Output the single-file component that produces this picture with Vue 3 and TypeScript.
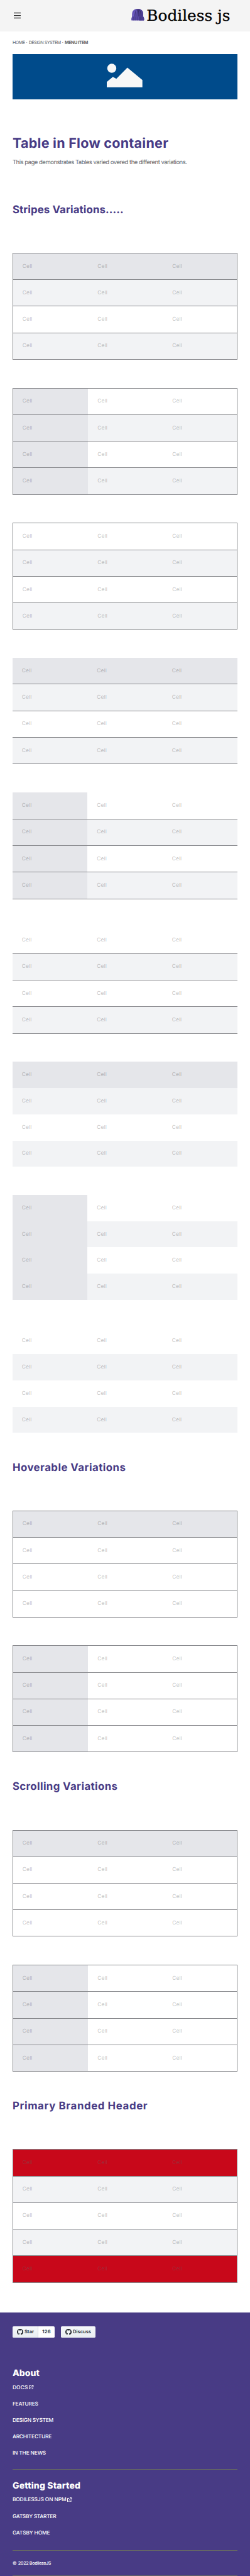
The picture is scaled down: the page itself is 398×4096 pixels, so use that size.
<script setup lang="ts">
import type { Directive } from 'vue'

type Frame = 'boxed' | 'lined' | 'plain'
interface TableSpec {
  frame: Frame
  header?: 'row' | 'column'
  striped?: boolean
  branded?: boolean
  rows: number
}
interface Section {
  title: string
  width: number
  tables: TableSpec[]
}
interface FooterLink {
  label: string
  width: number
  external?: boolean
}

const frames: Frame[] = ['boxed', 'lined', 'plain']
const sections: Section[] = [
  {
    title: 'Stripes Variations.....',
    width: 284,
    tables: frames.flatMap((frame): TableSpec[] => [
      { frame, header: 'row', striped: true, rows: 4 },
      { frame, header: 'column', striped: true, rows: 4 },
      { frame, striped: true, rows: 4 },
    ]),
  },
  {
    title: 'Hoverable Variations',
    width: 290,
    tables: [
      { frame: 'boxed', header: 'row', rows: 4 },
      { frame: 'boxed', header: 'column', rows: 4 },
    ],
  },
  {
    title: 'Scrolling Variations',
    width: 269,
    tables: [
      { frame: 'boxed', header: 'row', rows: 4 },
      { frame: 'boxed', header: 'column', rows: 4 },
    ],
  },
  {
    title: 'Primary Branded Header',
    width: 346,
    tables: [{ frame: 'boxed', striped: true, branded: true, rows: 5 }],
  },
]

const footer: { title: string; width: number; links: FooterLink[] }[] = [
  {
    title: 'About',
    width: 69,
    links: [
      { label: 'DOCS', width: 39.5, external: true },
      { label: 'FEATURES', width: 65.5 },
      { label: 'DESIGN SYSTEM', width: 104.5 },
      { label: 'ARCHITECTURE', width: 100 },
      { label: 'IN THE NEWS', width: 85.5 },
    ],
  },
  {
    title: 'Getting Started',
    width: 174,
    links: [
      { label: 'BODILESSJS ON NPM', width: 137.5, external: true },
      { label: 'GATSBY STARTER', width: 111.5 },
      { label: 'GATSBY HOME', width: 95.5 },
    ],
  },
]

function tableClass(t: TableSpec): string[] {
  return [
    t.frame,
    t.header ? `head-${t.header}` : '',
    t.striped ? 'striped' : '',
    t.branded ? 'branded' : '',
  ]
}

/* Tracks a line of text so that it spans the given width, in hundredths of a rem. */
const vTrack: Directive<HTMLElement, number> = {
  mounted(el, { value }) {
    const unit = parseFloat(getComputedStyle(document.documentElement).fontSize) / 100
    const count = (el.textContent ?? '').length
    const natural = el.getBoundingClientRect().width
    el.style.letterSpacing = `${(value * unit - natural) / count}px`
  },
}
</script>

<template>
  <div class="page">
    <header class="top">
      <svg class="burger" viewBox="0 0 18 15" aria-label="Menu">
        <path d="M0 1.1H18M0 7.5H18M0 13.9H18" stroke="#222" stroke-width="2" />
      </svg>
      <svg class="logo" viewBox="336 20 256 48">
        <path d="M338 44V37C338 28 344 23.3 352.300 23.300S366.500 28 366.500 37V44Z" fill="#6150b4" />
        <path d="M352 23.300C361 23.300 366.500 28 366.500 37V44H354Z" fill="#4f4096" />
        <path d="M345.500 44C345.500 35 346.500 29 350 25M350.500 44C350.500 35 350.700 30 351.500 25M355.500 44C355.500 35 355 30 353.500 25M361 44C361 35 360 29 355.500 24.500" fill="none" stroke="#30285c" stroke-width="1.300" />
        <path d="M341.500 44C341.500 36 342.500 31 345.500 27M348 44C348 36 348.400 31 350 27" fill="none" stroke="#7665cc" stroke-width="1" />
        <path d="M338.500 43H366.500C368.500 45.500 369.500 50 368.300 53H336.700C335.500 50 336.500 45.500 338.500 43Z" fill="#5a4aa8" />
        <path d="M357 43H366.500C368.500 45.500 369.500 50 368.300 53H357Z" fill="#4c3e91" />
        <path d="M342.500 43.500V53M347.500 43.500V53M352.500 43.500V53M356 43.500V53M360.500 43.500V53" stroke="#392f70" stroke-width="1.100" />
        <text x="375" y="53.700" textLength="214" lengthAdjust="spacingAndGlyphs">Bodiless js</text>
      </svg>
    </header>

    <nav class="crumbs">
      <span v-track="31.500">HOME</span><i>·</i><span v-track="82">DESIGN SYSTEM</span><i>·</i><b v-track="59.500">MENU ITEM</b>
    </nav>

    <div class="banner">
      <svg viewBox="273 163 92 61">
        <ellipse cx="285.800" cy="175.200" rx="11.600" ry="11.700" />
        <path d="M273 210L288.500 197L297.500 202L325.700 173.500L364.100 205V223.600H273Z" />
      </svg>
    </div>

    <h1><span v-track="399">Table in Flow container</span></h1>
    <p class="intro"><span v-track="446">This page demonstrates Tables varied overed the different variations.</span></p>

    <section v-for="s in sections" :key="s.title">
      <h2><span v-track="s.width">{{ s.title }}</span></h2>
      <div class="tables">
        <div v-for="(t, i) in s.tables" :key="i" class="table" :class="tableClass(t)">
          <div v-for="r in t.rows" :key="r" class="row">
            <div v-for="c in 3" :key="c" class="cell"><span v-track="25.200">Cell</span></div>
          </div>
        </div>
      </div>
    </section>

    <footer>
      <div class="buttons">
        <div class="gh">
          <div class="gh-main star">
            <svg viewBox="0 0 16 16"><path d="M8 0C3.580 0 0 3.580 0 8c0 3.540 2.290 6.530 5.470 7.590.4.070.55-.17.55-.38 0-.19-.01-.82-.01-1.490-2.010.37-2.530-.49-2.690-.94-.09-.23-.48-.94-.82-1.130-.28-.15-.68-.52-.01-.53.63-.01 1.080.58 1.230.82.72 1.210 1.870.87 2.330.66.07-.52.28-.87.51-1.070-1.780-.2-3.640-.89-3.640-3.950 0-.87.31-1.590.82-2.150-.08-.2-.36-1.020.08-2.120 0 0 .67-.21 2.200.82.64-.18 1.320-.27 2-.27s1.360.09 2 .27c1.530-1.040 2.200-.82 2.200-.82.44 1.100.16 1.920.08 2.120.51.56.82 1.270.82 2.150 0 3.070-1.870 3.750-3.650 3.950.29.25.54.73.54 1.480 0 1.070-.01 1.930-.01 2.200 0 .21.15.46.55.38A8.010 8.010 0 0 0 16 8c0-4.420-3.580-8-8-8z" /></svg>
            <span v-track="24.500">Star</span>
          </div>
          <div class="gh-count"><span v-track="21.500">126</span></div>
        </div>
        <div class="gh">
          <div class="gh-main discuss">
            <svg viewBox="0 0 16 16"><path d="M8 0C3.580 0 0 3.580 0 8c0 3.540 2.290 6.530 5.470 7.590.4.070.55-.17.55-.38 0-.19-.01-.82-.01-1.490-2.010.37-2.530-.49-2.690-.94-.09-.23-.48-.94-.82-1.130-.28-.15-.68-.52-.01-.53.63-.01 1.080.58 1.230.82.72 1.210 1.870.87 2.330.66.07-.52.28-.87.51-1.070-1.780-.2-3.640-.89-3.640-3.950 0-.87.31-1.590.82-2.150-.08-.2-.36-1.020.08-2.120 0 0 .67-.21 2.200.82.64-.18 1.320-.27 2-.27s1.360.09 2 .27c1.530-1.040 2.200-.82 2.200-.82.44 1.100.16 1.920.08 2.120.51.56.82 1.270.82 2.150 0 3.070-1.870 3.750-3.650 3.950.29.25.54.73.54 1.480 0 1.070-.01 1.930-.01 2.200 0 .21.15.46.55.38A8.010 8.010 0 0 0 16 8c0-4.420-3.580-8-8-8z" /></svg>
            <span v-track="46.500">Discuss</span>
          </div>
        </div>
      </div>
      <div v-for="g in footer" :key="g.title" class="group">
        <h3><span v-track="g.width">{{ g.title }}</span></h3>
        <ul>
          <li v-for="l in g.links" :key="l.label">
            <span v-track="l.width">{{ l.label }}</span>
            <svg v-if="l.external" viewBox="0 0 12 12">
              <path d="M5 2.300H.8V11.200H9.700V7M3.800 8.200L10.300 1.700M6.500.9H11.100V5.500" />
            </svg>
          </li>
        </ul>
      </div>
      <div class="copy"><span class="mark">©</span><span v-track="84">2022 BodilessJS</span></div>
    </footer>
  </div>
</template>

<style>
html {
  font-size: 62.24px;
}
body {
  background: #fff;
}
</style>

<style scoped>
.page {
  width: 398px;
  height: 4096px;
  overflow: hidden;
  display: flex;
  flex-direction: column;
  font-family: Inter, "Open Sans", sans-serif;
  color: #65666a;
  text-rendering: geometricPrecision;
  white-space: nowrap;
}
.page > * {
  flex: none;
}
svg {
  display: block;
  flex: none;
}
h1, h2, h3, p, ul {
  margin: 0;
  padding: 0;
}
.top {
  height: 0.8rem;
  background: #f4f4f4;
  display: flex;
  justify-content: space-between;
  padding: 0 0.48rem 0 0.35rem;
}
.burger {
  width: 0.18rem;
  height: 0.15rem;
  margin-top: 0.325rem;
}
.logo {
  width: 2.56rem;
  height: 0.48rem;
  margin-top: 0.2rem;
}
.logo text {
  font-family: "DejaVu Serif Condensed", "DejaVu Serif", serif;
  font-size: 38.5px;
  fill: #000;
  stroke: #000;
  stroke-width: 0.4;
}
.crumbs {
  margin: 0.167rem 0.32rem 0;
  height: 0.24rem;
  line-height: 0.25rem;
  font-size: 0.115rem;
  display: flex;
}
.crumbs i {
  width: 0.1rem;
  text-align: center;
  font-style: normal;
}
.banner {
  margin: 0.183rem 0.32rem 0;
  height: 1.15rem;
  background: #004b8b;
  display: flex;
}
.banner svg {
  width: 0.92rem;
  height: 0.61rem;
  margin: 0.24rem 0 0 2.41rem;
  fill: #f7f7f7;
}
h1 {
  margin: 0.877rem 0.32rem 0;
  height: 0.45rem;
  line-height: 0.484rem;
  font-size: 0.346rem;
  color: #483b85;
}
.intro {
  margin: 0.159rem 0.32rem 0.214rem;
  height: 0.24rem;
  line-height: 0.262rem;
  font-size: 0.153rem;
}
section {
  padding: 0.708rem 0.32rem 0;
}
h2 {
  height: 0.35rem;
  line-height: 0.382rem;
  font-size: 0.27rem;
  color: #483b85;
  margin-bottom: 0.922rem;
}
.tables {
  display: flex;
  flex-direction: column;
  gap: 0.72rem;
}
.table {
  box-sizing: border-box;
  height: 2.72rem;
  display: flex;
  flex-direction: column;
  --line: #85868a;
}
.boxed {
  height: 2.73rem;
  border: 1px solid var(--line);
  border-bottom: 0;
}
.plain {
  height: 2.68rem;
}
.branded {
  height: 3.41rem;
}
.row {
  flex: 1 1 0;
  display: grid;
  grid-template-columns: repeat(3, 1fr);
  border-bottom: 1px solid var(--line);
}
.plain .row {
  border-bottom: 0;
}
.boxed .row {
  grid-template-columns: 1.92rem 1.91rem 1fr;
}
.cell {
  display: flex;
  align-items: center;
  padding-left: 0.24rem;
  font-size: 0.135rem;
  color: rgba(96, 97, 101, 0.4);
}
.striped .row:nth-child(even) {
  background: #f2f3f5;
}
.head-row .row:first-child,
.head-column .cell:first-child {
  background: #e5e6ea;
}
.branded .row:first-child,
.branded .row:last-child {
  background: #c8081a;
}
footer {
  margin-top: 0.76rem;
  height: 6.73rem;
  box-sizing: border-box;
  padding: 0.36rem 0.32rem 0;
  background: #483b85;
  color: #fff;
  display: flex;
  flex-direction: column;
}
.buttons {
  display: flex;
  gap: 0.16rem;
  height: 0.28rem;
  margin-bottom: 0.761rem;
}
.gh {
  display: flex;
  border-radius: 0.03rem;
  overflow: hidden;
  font: 600 0.122rem/0.28rem Inter, sans-serif;
  color: #24292f;
}
.gh-main {
  box-sizing: border-box;
  display: flex;
  align-items: center;
  gap: 0.033rem;
  padding-left: 0.11rem;
  background: linear-gradient(#f6f8fa, #e9edf1);
}
.gh-main svg {
  width: 0.162rem;
  height: 0.162rem;
  fill: #24292f;
}
.star {
  width: 0.66rem;
  border-right: 1px solid #d5d8dc;
}
.discuss {
  width: 0.88rem;
}
.gh-count {
  width: 0.42rem;
  text-align: center;
  background: #fff;
}
h3 {
  height: 0.3rem;
  line-height: 0.332rem;
  font-size: 0.226rem;
  font-weight: 800;
  margin-bottom: 0.096rem;
}
ul {
  list-style: none;
}
li {
  height: 0.421rem;
  line-height: 0.264rem;
  font-size: 0.135rem;
  font-weight: 500;
  display: flex;
  gap: 0.03rem;
}
li svg {
  width: 0.12rem;
  height: 0.12rem;
  margin-top: 0.053rem;
  fill: none;
  stroke: #fff;
  stroke-width: 1.6;
}
.group {
  box-sizing: border-box;
  height: 2.622rem;
  border-bottom: 1px solid #666863;
  margin-bottom: 0.25rem;
}
.group + .group {
  height: 1.818rem;
  margin-bottom: 0.205rem;
}
.copy {
  box-sizing: border-box;
  height: 0.437rem;
  border-bottom: 1px solid #666863;
  line-height: 0.214rem;
  font-size: 0.115rem;
  font-weight: 500;
  display: flex;
}
.mark {
  width: 0.143rem;
}
</style>
